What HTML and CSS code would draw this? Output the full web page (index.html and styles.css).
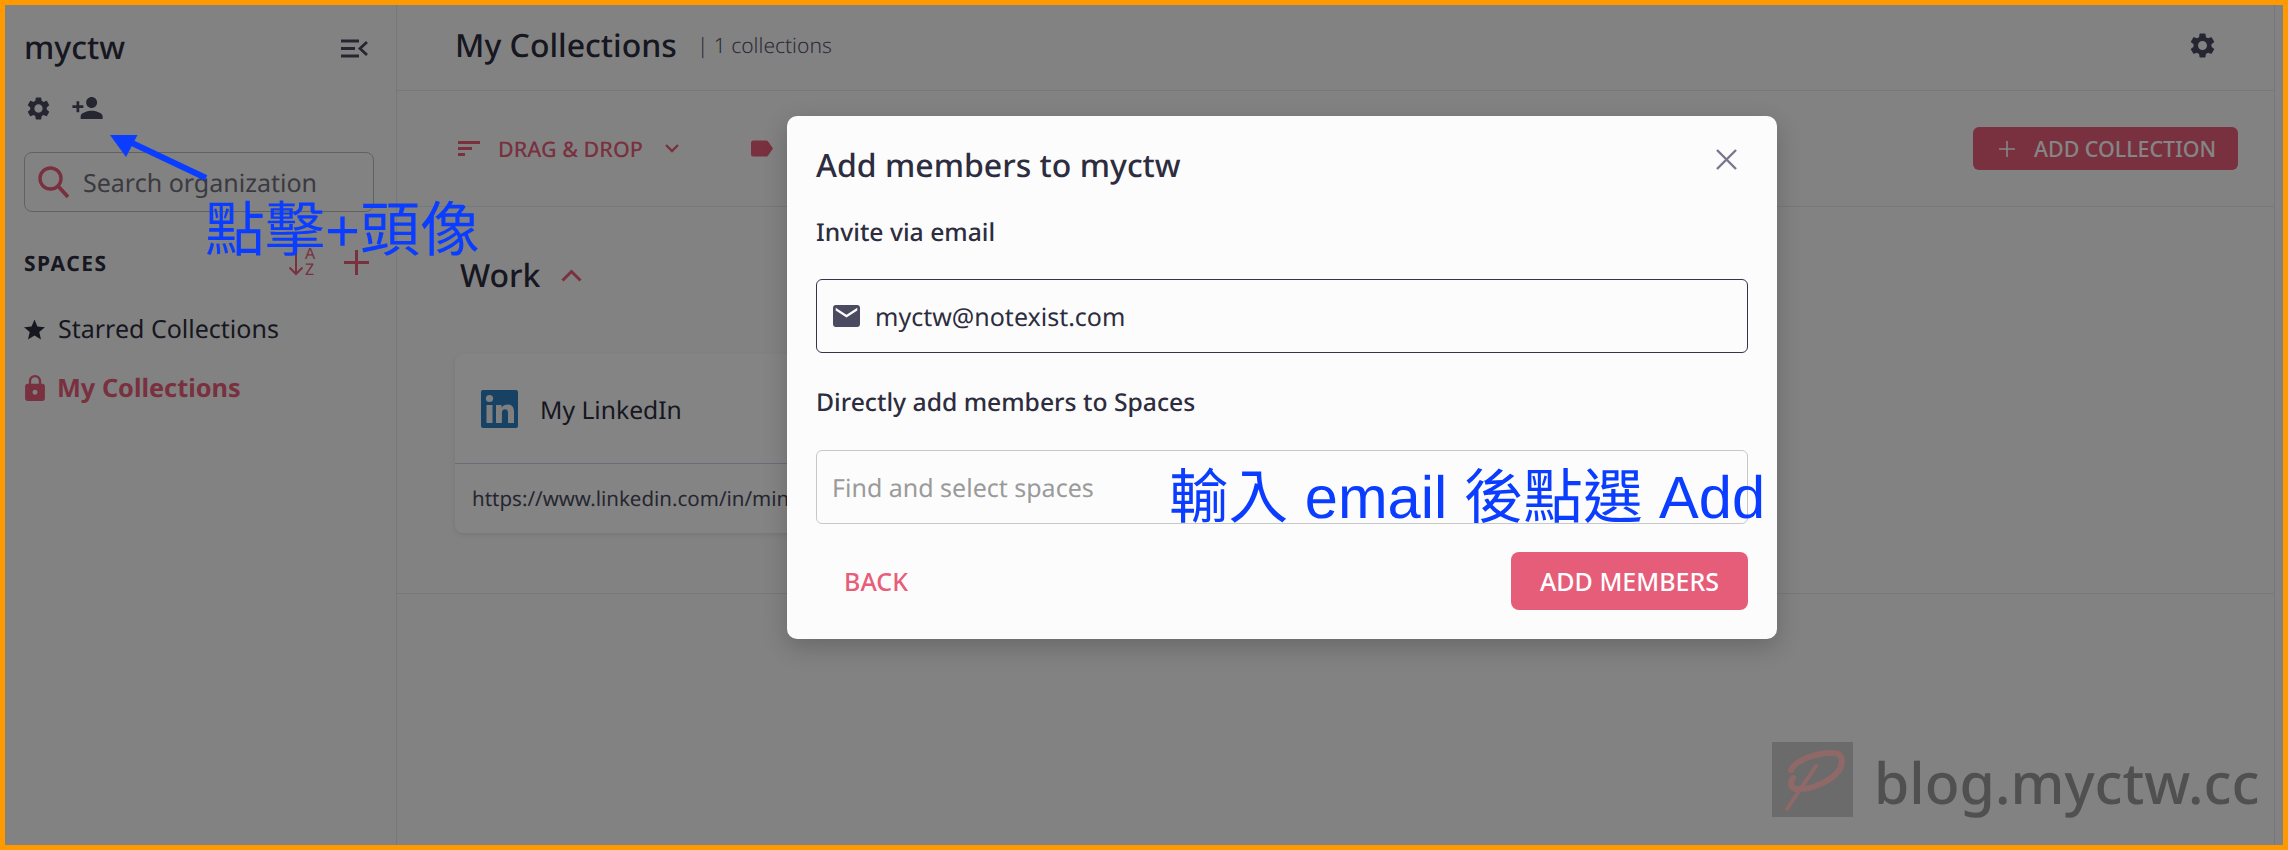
FILE: index.html
```html
<!DOCTYPE html>
<html lang="en">
<head>
<meta charset="utf-8">
<title>My Collections</title>
<link rel="stylesheet" href="styles.css">
</head>
<body>
<div class="frame">
  <div class="app">
    <aside class="sidebar">
      <div class="brand-row">
        <span class="brand">myctw</span>
        <svg class="collapse" viewBox="0 0 27 19"><path d="M0 2h18M0 9.500h14M0 17h18M26 3l-7 6.500 7 6.500" fill="none" stroke="#4a4a60" stroke-width="2.800"/></svg>
      </div>
      <div class="org-actions">
        <svg class="ic-gear" viewBox="2 2 20 20"><path fill="#4a4a60" d="M19.14 12.94c.04-.3.06-.61.06-.94 0-.32-.02-.64-.07-.94l2.03-1.58c.18-.14.23-.41.12-.61l-1.92-3.32c-.12-.22-.37-.29-.59-.22l-2.39.96c-.5-.38-1.03-.7-1.62-.94l-.36-2.54c-.04-.24-.24-.41-.48-.41h-3.84c-.24 0-.43.17-.47.41l-.36 2.54c-.59.24-1.13.57-1.62.94l-2.39-.96c-.22-.08-.47 0-.59.22L2.740 8.870c-.12.21-.08.47.12.61l2.030 1.580c-.05.3-.09.63-.09.94s.02.64.07.94l-2.030 1.580c-.18.14-.23.41-.12.61l1.920 3.320c.12.22.37.29.59.22l2.390-.96c.5.38 1.030.7 1.620.94l.36 2.540c.05.24.24.41.48.41h3.840c.24 0 .44-.17.47-.41l.36-2.540c.59-.24 1.130-.56 1.620-.94l2.390.96c.22.08.47 0 .59-.22l1.920-3.320c.12-.22.07-.47-.12-.61l-2.010-1.580zM12 15.600c-1.980 0-3.600-1.620-3.600-3.600s1.620-3.600 3.600-3.600 3.600 1.620 3.600 3.600-1.620 3.600-3.600 3.600z"/></svg>
        <svg class="ic-add" viewBox="1 4 22 16"><path fill="#4a4a60" d="M15 12c2.210 0 4-1.790 4-4s-1.790-4-4-4-4 1.790-4 4 1.790 4 4 4zm-9-2V7H4v3H1v2h3v3h2v-3h3v-2H6zm9 4c-2.670 0-8 1.340-8 4v2h16v-2c0-2.660-5.330-4-8-4z"/></svg>
      </div>
      <div class="org-search">
        <svg class="ic-search" viewBox="0 0 31 32"><circle cx="12.500" cy="12.500" r="10.500" fill="none" stroke="#e85d7a" stroke-width="3.400"/><path d="M20 20l10 11" stroke="#e85d7a" stroke-width="3.800"/></svg>
        <span class="org-placeholder">Search organization</span>
      </div>
      <div class="spaces-row">
        <span class="spaces-title">SPACES</span>
        <svg class="ic-sort" viewBox="0 0 29 28"><path d="M8 1v25M1.500 19.500L8 26l6.500-6.500" fill="none" stroke="#e85d7a" stroke-width="2"/><text x="17" y="11" class="sort-letter">A</text><text x="17" y="27" class="sort-letter">Z</text></svg>
        <svg class="ic-plus" viewBox="0 0 25 25"><path d="M12.500 0v25M0 12.500h25" stroke="#e85d7a" stroke-width="3"/></svg>
      </div>
      <div class="nav-item">
        <svg class="ic-star" viewBox="2 2 20 19"><path fill="#2d2d3f" d="M12 17.270L18.180 21l-1.640-7.030L22 9.240l-7.190-.61L12 2 9.190 8.630 2 9.240l5.460 4.730L5.820 21z"/></svg>
        <span>Starred Collections</span>
      </div>
      <div class="nav-item nav-active">
        <svg class="ic-lock" viewBox="4 1 16 21"><path fill="#e85d7a" d="M18 8h-1V6c0-2.760-2.240-5-5-5S7 3.240 7 6v2H6c-1.100 0-2 .9-2 2v10c0 1.100.9 2 2 2h12c1.100 0 2-.9 2-2V10c0-1.100-.9-2-2-2zm-6 9c-1.100 0-2-.9-2-2s.9-2 2-2 2 .9 2 2-.9 2-2 2zm3.100-9H8.900V6c0-1.710 1.390-3.100 3.100-3.100 1.710 0 3.100 1.390 3.100 3.100v2z"/></svg>
        <span>My Collections</span>
      </div>
    </aside>
    <main class="main">
      <header class="page-head">
        <h1 class="page-title">My Collections</h1>
        <span class="page-count">| 1 collections</span>
        <svg class="ic-head-gear" viewBox="2 2 20 20"><path fill="#4a4a60" d="M19.14 12.94c.04-.3.06-.61.06-.94 0-.32-.02-.64-.07-.94l2.03-1.58c.18-.14.23-.41.12-.61l-1.92-3.32c-.12-.22-.37-.29-.59-.22l-2.39.96c-.5-.38-1.03-.7-1.62-.94l-.36-2.54c-.04-.24-.24-.41-.48-.41h-3.84c-.24 0-.43.17-.47.41l-.36 2.54c-.59.24-1.13.57-1.62.94l-2.39-.96c-.22-.08-.47 0-.59.22L2.740 8.870c-.12.21-.08.47.12.61l2.030 1.580c-.05.3-.09.63-.09.94s.02.64.07.94l-2.030 1.580c-.18.14-.23.41-.12.61l1.920 3.320c.12.22.37.29.59.22l2.390-.96c.5.38 1.030.7 1.620.94l.36 2.540c.05.24.24.41.48.41h3.840c.24 0 .44-.17.47-.41l.36-2.540c.59-.24 1.130-.56 1.620-.94l2.390.96c.22.08.47 0 .59-.22l1.920-3.320c.12-.22.07-.47-.12-.61l-2.010-1.580zM12 15.600c-1.980 0-3.600-1.620-3.600-3.600s1.620-3.600 3.600-3.600 3.600 1.620 3.600 3.600-1.620 3.600-3.600 3.600z"/></svg>
      </header>
      <div class="toolbar">
        <svg class="ic-sortlines" viewBox="0 0 22 15"><path d="M0 1.500h22M0 7.500h14M0 13.500h7" stroke="#e85d7a" stroke-width="3"/></svg>
        <span class="tool-label">DRAG &amp; DROP</span>
        <svg class="ic-chev" viewBox="0 0 14 9"><path d="M1 1l6 6 6-6" fill="none" stroke="#e85d7a" stroke-width="2.400"/></svg>
        <svg class="ic-tag" viewBox="3 5 19 14"><path fill="#e85d7a" d="M17.630 5.840C17.270 5.330 16.670 5 16 5L5 5.010C3.900 5.010 3 5.900 3 7v10c0 1.100.9 1.990 2 1.990L16 19c.67 0 1.270-.33 1.630-.84L22 12l-4.370-6.160z"/></svg>
        <button class="btn-add-collection"><svg class="ic-btn-plus" viewBox="0 0 16 16"><path d="M8 0v16M0 8h16" stroke="#fff" stroke-width="1.600"/></svg>ADD COLLECTION</button>
      </div>
      <section class="space-section">
        <div class="space-head">
          <span class="space-name">Work</span>
          <svg class="ic-chev-up" viewBox="0 0 21 13"><path d="M1.500 11.500l9-9 9 9" fill="none" stroke="#e85d7a" stroke-width="3"/></svg>
        </div>
        <article class="card">
          <div class="card-top">
            <svg class="ic-linkedin" viewBox="0 0 37 38"><rect width="37" height="38" rx="2" fill="#2f7fc0"/><circle cx="8.500" cy="8.500" r="3.600" fill="#f4f4f4"/><path d="M5.500 15h6v18h-6zM15 15h5.600v2.800c1.400-2.200 3.500-3.300 6-3.300 4.500 0 6.400 2.800 6.400 7.500V33h-6V23c0-2.500-.8-3.800-2.900-3.800-2.200 0-3.200 1.600-3.200 3.900V33H15z" fill="#f4f4f4"/></svg>
            <span class="card-title">My LinkedIn</span>
          </div>
          <div class="card-url">https://www.linkedin.com/in/minghsuan-tsai</div>
        </article>
      </section>
    </main>
  </div>

  <div class="watermark">
    <svg class="wm-logo" viewBox="0 0 81 75"><rect width="81" height="75" fill="#6b6b6b"/><path d="M19 28C24 17 48 10 62 11c11 1 10 13 1 22-10 9-27 15-39 14-6-1-6-7-3-11" fill="none" stroke="#8f6868" stroke-width="6" stroke-linecap="round"/><path d="M44 24C36 36 26 50 15 67" fill="none" stroke="#8f6868" stroke-width="4" stroke-linecap="round"/></svg>
    <span class="wm-text">blog.myctw.cc</span>
  </div>

  <div class="overlay"></div>

  <div class="dialog">
    <div class="dialog-head">
      <h2 class="dialog-title">Add members to myctw</h2>
      <svg class="ic-close" viewBox="0 0 21 21"><path d="M1 1l19 19M20 1L1 20" stroke="#77778f" stroke-width="2.400"/></svg>
    </div>
    <div class="field-label label-invite">Invite via email</div>
    <div class="input input-email">
      <svg class="ic-mail" viewBox="2 4 20 16" preserveAspectRatio="none"><path fill="#4a4a60" d="M20 4H4c-1.100 0-1.990.9-1.990 2L2 18c0 1.100.9 2 2 2h16c1.100 0 2-.9 2-2V6c0-1.100-.9-2-2-2zm0 4l-8 5-8-5V6l8 5 8-5v2z"/></svg>
      <span class="input-value">myctw@notexist.com</span>
    </div>
    <div class="field-label label-spaces">Directly add members to Spaces</div>
    <div class="input input-spaces">Find and select spaces</div>
    <div class="dialog-actions">
      <button class="btn-back">BACK</button>
      <button class="btn-primary">ADD MEMBERS</button>
    </div>
  </div>

  <svg class="arrow" viewBox="0 0 120 60"><path d="M96 43L22 8" stroke="#0a3dff" stroke-width="6"/><path d="M0 0h27.500L16 22z" fill="#0a3dff"/></svg>
  <div class="note note-one">點擊+頭像</div>
  <div class="note note-two">輸入 email 後點選 Add</div>
</div>
</body>
</html>
```

FILE: styles.css
```css
* { box-sizing: border-box; }
html, body { margin: 0; height: 100%; }
body {
  font-family: "Noto Sans", "Open Sans", sans-serif;
  color: #2d2d3f;
  background: #fafafa;
  overflow: hidden;
  text-rendering: geometricPrecision;
}
button { font-family: inherit; border: 0; cursor: pointer; }
svg { display: block; flex: none; }

.frame {
  position: relative;
  width: 2288px;
  height: 850px;
  border: 5px solid #ff9900;
  overflow: hidden;
}
.app { display: flex; height: 100%; padding-right: 8px; }

.sidebar {
  width: 392px;
  flex: none;
  height: 100%;
  padding: 0 0 0 19px;
  border-right: 1px solid #e4e4f4;
}
.brand-row {
  display: flex;
  align-items: center;
  justify-content: space-between;
  height: 52px;
  margin-top: 17px;
  padding-right: 28px;
}
.brand { font-size: 32px; font-weight: 500; line-height: 52px; }
.collapse { width: 27px; height: 19px; }
.org-actions { display: flex; align-items: center; gap: 22px; margin-top: 22px; padding-left: 3px; height: 24px; }
.ic-gear { width: 23px; height: 23px; }
.ic-add { width: 31px; height: 22px; }
.org-search {
  display: flex;
  align-items: center;
  width: 350px;
  height: 60px;
  margin-top: 32px;
  padding-left: 13px;
  gap: 14px;
  border: 1px solid #bbb;
  border-radius: 8px;
}
.ic-search { width: 31px; height: 32px; }
.org-placeholder { padding-top: 2px; font-size: 25px; color: #6f6f7c; white-space: nowrap; }
.spaces-row {
  display: flex;
  align-items: center;
  width: 345px;
  height: 28px;
  margin-top: 36px;
}
.spaces-title { padding-top: 3px; font-size: 21px; font-weight: 700; letter-spacing: 1.500px; margin-right: auto; }
.ic-sort { width: 29px; height: 28px; margin-right: 27px; }
.sort-letter { font-size: 16px; fill: #e85d7a; }
.ic-plus { width: 25px; height: 25px; }
.nav-item {
  display: flex;
  align-items: center;
  gap: 13px;
  height: 40px;
  margin-top: 33px;
  font-size: 25px;
  white-space: nowrap;
}
.nav-item + .nav-item { margin-top: 19px; }
.nav-active { color: #e85d7a; font-weight: 700; font-size: 25.300px; }
.ic-star { width: 21px; height: 21px; }
.ic-lock { width: 20px; height: 26px; margin-left: 1px; margin-right: -1px; }

.main { flex: 1; min-width: 0; border-right: 1px solid #e4e4f4; }
.page-head {
  display: flex;
  align-items: center;
  height: 86px;
  padding: 0 59px 4px 58px;
  border-bottom: 1px solid #e4e4f4;
}
.page-title { margin: 0; font-size: 32px; font-weight: 500; line-height: 44px; }
.page-count { margin-left: 20px; font-size: 21px; font-weight: 300; color: #55556a; }
.ic-head-gear { width: 25px; height: 25px; margin-left: auto; }
.toolbar {
  display: flex;
  align-items: center;
  height: 116px;
  padding: 0 36px 0 61px;
  border-bottom: 1px solid #e4e4f4;
}
.ic-sortlines { width: 22px; height: 15px; }
.tool-label { margin-left: 18px; padding-top: 2px; font-size: 21.500px; font-weight: 500; color: #e85d7a; }
.ic-chev { width: 14px; height: 9px; margin-left: 22px; }
.ic-tag { width: 22px; height: 17px; margin-left: 72px; margin-right: auto; }
.btn-add-collection {
  display: flex;
  align-items: center;
  height: 43px;
  width: 265px;
  padding-left: 26px;
  font-size: 21.400px;
  font-weight: 500;
  color: #fff;
  background: #e85d7a;
  border-radius: 6px;
}
.ic-btn-plus { width: 16px; height: 16px; margin-right: 19px; }
.space-section { height: 387px; border-bottom: 1px solid #e4e4f4; padding-left: 58px; padding-top: 46px; }
.space-head { display: flex; align-items: center; gap: 21px; height: 44px; padding-left: 5px; }
.space-name { padding-top: 2px; font-size: 32px; font-weight: 500; line-height: 44px; }
.ic-chev-up { width: 21px; height: 13px; }
.card {
  width: 900px;
  height: 179px;
  margin-top: 57px;
  background: #fdfdfd;
  border-radius: 8px;
  box-shadow: 0 2px 6px rgba(0, 0, 0, .1);
}
.card-top {
  display: flex;
  align-items: center;
  height: 110px;
  padding-left: 26px;
  gap: 22px;
  border-bottom: 1px solid #cfcfe4;
}
.ic-linkedin { width: 37px; height: 38px; }
.card-title { padding-top: 3px; font-size: 24.700px; }
.card-url { padding: 21px 0 0 17px; font-size: 20.500px; color: #4a4a60; white-space: nowrap; }

.overlay { position: absolute; inset: 0; background: rgba(0, 0, 0, .48); }

.watermark {
  position: absolute;
  left: 1767px;
  top: 737px;
  display: flex;
  align-items: center;
  gap: 21px;
  z-index: 1;
}
.wm-logo { width: 81px; height: 75px; }
.wm-text { font-family: "Noto Sans", sans-serif; font-weight: 500; font-size: 57px; color: #505050; line-height: 75px; white-space: nowrap; position: relative; top: 3px; }

.dialog {
  position: absolute;
  left: 782px;
  top: 111px;
  width: 990px;
  height: 523px;
  padding: 0 29px;
  background: #fcfcfc;
  border-radius: 10px;
  box-shadow: 0 8px 24px rgba(0, 0, 0, .2);
  z-index: 2;
}
.dialog-head { display: flex; align-items: center; justify-content: space-between; height: 96px; padding-right: 11px; }
.dialog-title { margin: 0; padding-top: 2px; font-size: 32px; font-weight: 500; }
.ic-close { width: 21px; height: 21px; margin-top: -10px; }
.field-label { font-size: 24.700px; font-weight: 500; line-height: 40px; }
.label-invite { margin-top: 1px; }
.label-spaces { margin-top: 30px; }
.input {
  display: flex;
  align-items: center;
  height: 74px;
  font-size: 25px;
  border-radius: 6px;
}
.input-email { margin-top: 26px; padding-left: 16px; gap: 15px; border: 1px solid #35354a; }
.input-value { padding-top: 2px; }
.ic-mail { width: 27px; height: 22px; }
.input-spaces { margin-top: 27px; padding: 2px 0 0 15px; color: #9a9a9a; border: 1px solid #c8c8c8; }
.dialog-actions { display: flex; align-items: center; justify-content: space-between; margin-top: 28px; }
.btn-back { width: 120px; height: 58px; background: none; color: #e85d7a; font-size: 25px; font-weight: 500; }
.btn-primary { width: 237px; height: 58px; background: #e65d7a; color: #fff; font-size: 25px; font-weight: 500; border-radius: 8px; }

.arrow { position: absolute; left: 105px; top: 130px; width: 120px; height: 60px; z-index: 3; }
.note {
  position: absolute;
  z-index: 3;
  font-family: "Liberation Sans", "Noto Sans CJK TC", sans-serif;
  font-size: 60px;
  line-height: 70px;
  color: #0a3dff;
  white-space: nowrap;
}
.note-one { left: 200px; top: 191px; }
.note-two { left: 1164px; top: 458px; font-size: 59.600px; }
```
